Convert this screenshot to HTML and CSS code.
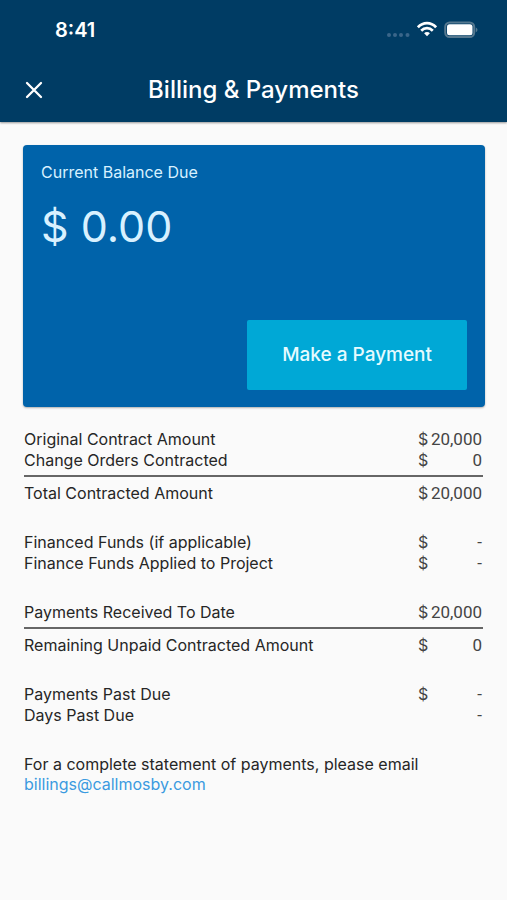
FILE: index.html
```html
<!DOCTYPE html>
<html lang="en">
<head>
    <meta charset="UTF-8">
    <meta name="viewport" content="width=device-width, initial-scale=1.0">
    <title>Billing &amp; Payments</title>
    <link rel="stylesheet" href="styles.css">
</head>
<body>
    <header class="header">
        <div class="status-bar">
            <span class="time">8:41</span>
            <div class="status-icons">
                <svg class="dots" width="24" height="20" viewBox="0 0 24 20" fill="#3a668a">
                    <circle cx="3" cy="15" r="2"/>
                    <circle cx="9" cy="15" r="2"/>
                    <circle cx="15" cy="15" r="2"/>
                    <circle cx="21.500" cy="15" r="2"/>
                </svg>
                <svg class="wifi" width="20" height="20" viewBox="0 0 20 20" fill="none" stroke="white" stroke-width="2.700">
                    <path d="M0.900 7.300 C6 1.700 14 1.700 19.100 7.300"/>
                    <path d="M4.200 10.700 C7.500 7.300 12.500 7.300 15.800 10.700"/>
                    <path d="M7.100 13.200 C8.700 11.600 11.300 11.600 12.900 13.200 L10 16.300 Z" fill="white" stroke="none"/>
                </svg>
                <svg class="battery" width="34" height="20" viewBox="0 0 34 20">
                    <rect x="1.200" y="2.500" width="29" height="14.600" rx="4.500" fill="none" stroke="#55788f" stroke-width="2"/>
                    <rect x="3" y="4.300" width="25.500" height="11" rx="2.500" fill="white"/>
                    <path d="M31.800 7.500 C34 8.500 34 11.200 31.800 12.200 Z" fill="#55788f"/>
                </svg>
            </div>
        </div>
        <div class="title-bar">
            <button class="close-button" aria-label="Close">
                <svg width="18" height="18" viewBox="0 0 18 18" stroke="white" stroke-width="2.300" stroke-linecap="round">
                    <path d="M2 2 L16 16 M16 2 L2 16"/>
                </svg>
            </button>
            <h1>Billing &amp; Payments</h1>
        </div>
    </header>

    <main class="content">
        <section class="balance-card">
            <h2>Current Balance Due</h2>
            <p class="balance">$ 0.00</p>
            <button class="pay-button">Make a Payment</button>
        </section>

        <table class="summary">
            <tbody>
                <tr>
                    <th scope="row">Original Contract Amount</th>
                    <td class="currency">$</td>
                    <td class="amount">20,000</td>
                </tr>
                <tr class="last">
                    <th scope="row">Change Orders Contracted</th>
                    <td class="currency">$</td>
                    <td class="amount">0</td>
                </tr>
                <tr class="total">
                    <th scope="row">Total Contracted Amount</th>
                    <td class="currency">$</td>
                    <td class="amount">20,000</td>
                </tr>
            </tbody>
            <tbody>
                <tr class="first">
                    <th scope="row">Financed Funds (if applicable)</th>
                    <td class="currency">$</td>
                    <td class="amount">-</td>
                </tr>
                <tr>
                    <th scope="row">Finance Funds Applied to Project</th>
                    <td class="currency">$</td>
                    <td class="amount">-</td>
                </tr>
            </tbody>
            <tbody>
                <tr class="first last">
                    <th scope="row">Payments Received To Date</th>
                    <td class="currency">$</td>
                    <td class="amount">20,000</td>
                </tr>
                <tr class="total">
                    <th scope="row">Remaining Unpaid Contracted Amount</th>
                    <td class="currency">$</td>
                    <td class="amount">0</td>
                </tr>
            </tbody>
            <tbody>
                <tr class="first">
                    <th scope="row">Payments Past Due</th>
                    <td class="currency">$</td>
                    <td class="amount">-</td>
                </tr>
                <tr>
                    <th scope="row">Days Past Due</th>
                    <td class="currency"></td>
                    <td class="amount">-</td>
                </tr>
            </tbody>
        </table>

        <p class="statement">
            For a complete statement of payments, please email<br>
            <a href="mailto:billings@callmosby.com">billings@callmosby.com</a>
        </p>
    </main>
</body>
</html>
```
FILE: styles.css
```css
* {
    box-sizing: border-box;
}

body {
    font-family: Inter, "Liberation Sans", sans-serif;
    margin: 0;
    background: #fafafa;
    color: #262626;
    font-size: 16px;
    line-height: 20px;
}

h1, h2, p {
    margin: 0;
}

button {
    border: none;
    font-family: inherit;
    cursor: pointer;
}

/* Header */
.header {
    padding-bottom: 2px;
    background: #003c64;
    color: white;
    box-shadow: 0 1px 2px rgba(0, 0, 0, 0.4);
}

.status-bar {
    display: flex;
    justify-content: space-between;
    align-items: center;
    height: 60px;
    padding: 0 29px 0 55px;
}

.time {
    font-size: 20px;
    font-weight: 600;
}

.status-icons {
    display: flex;
    gap: 7px;
}

.title-bar {
    display: grid;
    grid-template-columns: 48px 1fr 48px;
    align-items: center;
    height: 60px;
    padding: 0 10px;
}

.close-button {
    display: flex;
    align-items: center;
    justify-content: center;
    height: 48px;
    padding: 0;
    background: none;
}

.title-bar h1 {
    font-size: 24px;
    font-weight: 500;
    line-height: 30px;
    text-align: center;
}

/* Balance card */
.content {
    padding: 23px 22px 40px 23px;
}

.balance-card {
    display: flex;
    flex-direction: column;
    min-height: 262px;
    padding: 17px 18px;
    background: #0063aa;
    color: #d8f1ff;
    border-radius: 4px;
    box-shadow: 0 1px 2px rgba(0, 0, 0, 0.3);
}

.balance-card h2 {
    font-size: 16px;
    font-weight: 400;
}

.balance {
    margin-top: 18px;
    font-size: 43px;
    line-height: 52px;
}

.pay-button {
    align-self: flex-end;
    margin-top: auto;
    padding: 22px 35px;
    background: #00a8d6;
    color: #e6fbff;
    border-radius: 2px;
    font-size: 19px;
    font-weight: 500;
    line-height: 26px;
}

/* Contract summary */
.summary {
    width: 100%;
    margin-top: 22px;
    padding: 0 2px 0 1px;
    border-spacing: 0;
}

.summary th,
.summary td {
    padding: 0 0 1px;
    font-weight: 400;
    text-align: left;
}

.summary .currency {
    width: 12px;
    color: #444;
}

.summary .amount {
    width: 53px;
    padding-right: 1px;
    color: #444;
    font-family: Roboto, "Noto Sans", sans-serif;
    font-size: 17px;
    text-align: right;
}

.summary .first th,
.summary .first td {
    padding-top: 28px;
}

.summary .last th,
.summary .last td {
    padding-bottom: 5px;
}

.summary .total th,
.summary .total td {
    padding-top: 6px;
    border-top: 2px solid #666;
}

.statement {
    margin-top: 28px;
    padding: 0 1px;
}

.statement a {
    color: #3b9ae0;
    text-decoration: none;
}
```
